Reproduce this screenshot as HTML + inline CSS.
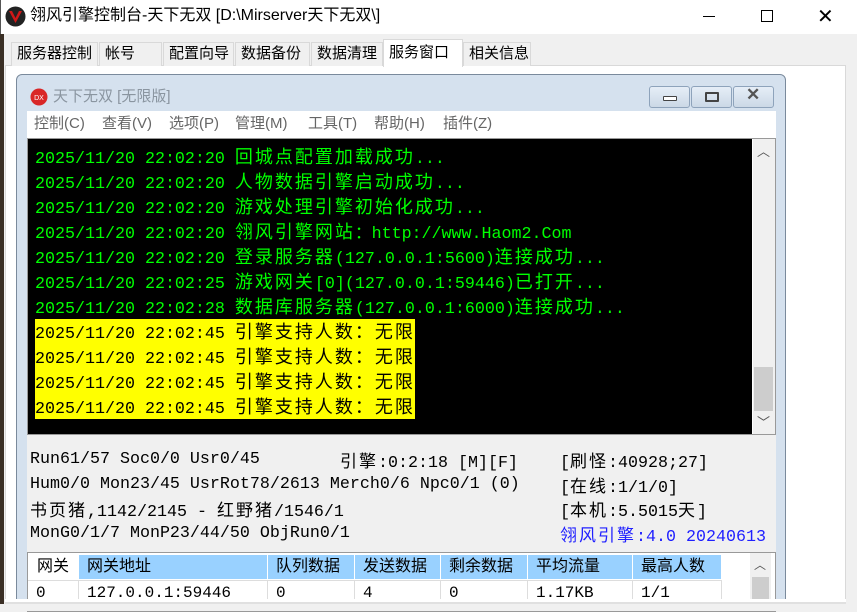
<!DOCTYPE html>
<html><head><meta charset="utf-8"><style>
*{margin:0;padding:0;box-sizing:border-box}
body{width:857px;height:611px;overflow:hidden;background:#f0f0f0;position:relative;font-family:"Liberation Sans","Noto Sans CJK SC",sans-serif}
.a{position:absolute}
.tb{left:0;top:0;width:857px;height:34px;background:#fff;border-left:1px solid #555}
.tab{position:absolute;top:42px;height:24px;background:#f0f0f0;border:1px solid #d9d9d9;border-bottom:none;font-size:15px;line-height:22px;padding-left:5px;color:#000}
.mono{font-family:"Liberation Mono","Noto Sans CJK SC",monospace}
.ln{position:absolute;left:35px;font-size:16.67px;line-height:25px;height:25px;color:#00ff00;white-space:nowrap}
.ln i{font-style:normal;font-family:"Noto Sans CJK SC",sans-serif;font-size:18px;letter-spacing:2px}
.y{background:#ffff00;color:#000}
.st{position:absolute;font-size:16.67px;line-height:25px;white-space:nowrap;color:#000}
.st i{font-style:normal;font-family:"Noto Sans CJK SC",sans-serif;font-size:17px;letter-spacing:2px}
.th{position:absolute;top:555px;height:24px;background:#99d1ff;font-size:16px;line-height:24px;padding-left:8px;border-right:1px solid #fff}
.td{position:absolute;top:580px;height:24px;font-size:16px;line-height:24px;padding-left:8px;border-right:1px solid #ddd;border-top:1px solid #ddd}
.btn{position:absolute;top:86px;width:41px;height:22px;border:1px solid #8ea3bb;border-radius:3px;background:linear-gradient(#e6eef7,#cbd8e6)}
.m{position:absolute;top:114px;font-size:15px;color:#666;line-height:20px;white-space:nowrap}
</style></head><body>
<div class="a" style="left:0;top:0;width:4px;height:611px;background:#3a2f25"></div>
<div class="a tb"></div>
<svg class="a" style="left:5px;top:6px" width="21" height="21" viewBox="0 0 21 21"><circle cx="10.5" cy="10.5" r="10" fill="#222"/><path d="M4 5 L10.5 17 L17 5 L14 5 L10.5 12 L7 5Z" fill="#d01818"/></svg>
<div class="a" style="left:30px;top:6px;font-size:16px;line-height:20px">翎风引擎控制台-天下无双 [D:\Mirserver天下无双\]</div>
<div class="a" style="left:703px;top:16px;width:12px;height:1px;background:#000"></div>
<div class="a" style="left:761px;top:10px;width:12px;height:12px;border:1px solid #000"></div>
<div class="a" style="left:817px;top:4px;font-size:20px;font-weight:300">✕</div>

<div class="a" style="left:5px;top:65px;width:841px;height:537px;background:#fff;border:1px solid #d9d9d9"></div>
<div class="tab" style="left:11px;width:87px">服务器控制</div>
<div class="tab" style="left:99px;width:63px">帐号</div>
<div class="tab" style="left:163px;width:71px">配置向导</div>
<div class="tab" style="left:235px;width:75px">数据备份</div>
<div class="tab" style="left:311px;width:72px">数据清理</div>
<div class="tab" style="left:383px;top:39px;height:28px;width:80px;background:#fff;line-height:26px">服务窗口</div>
<div class="tab" style="left:463px;width:68px">相关信息</div>

<div class="a" style="left:16px;top:74px;width:770px;height:532px;background:#d5e1ee;border:1px solid #7a8a9c;border-radius:6px 6px 0 0"></div>
<svg class="a" style="left:30px;top:88px" width="18" height="18"><circle cx="9" cy="9" r="8.5" fill="#d92727"/><text x="9" y="12" font-size="7" fill="#fff" text-anchor="middle" font-family="Liberation Sans">DX</text></svg>
<div class="a" style="left:53px;top:87px;font-size:15px;color:#8a95a0;line-height:20px">天下无双 [无限版]</div>
<div class="btn" style="left:649px"><div class="a" style="left:13px;top:9px;width:14px;height:5px;border:1px solid #444;background:#fff;border-radius:1px"></div></div>
<div class="btn" style="left:691px"><div class="a" style="left:13px;top:5px;width:14px;height:10px;border:2px solid #444;border-radius:1px"></div></div>
<div class="btn" style="left:733px"><div class="a" style="left:12px;top:-2px;font-size:17px;font-weight:bold;color:#555">✕</div></div>
<div class="a" style="left:27px;top:111px;width:749px;height:27px;background:#fff"></div>
<div class="m" style="left:34px">控制(C)</div>
<div class="m" style="left:102px">查看(V)</div>
<div class="m" style="left:169px">选项(P)</div>
<div class="m" style="left:235px">管理(M)</div>
<div class="m" style="left:308px">工具(T)</div>
<div class="m" style="left:374px">帮助(H)</div>
<div class="m" style="left:443px">插件(Z)</div>

<div class="a" style="left:27px;top:138px;width:749px;height:297px;background:#fff;border:1px solid #999"></div>
<div class="a" style="left:28px;top:139px;width:724px;height:295px;background:#000"></div>
<div class="a" style="left:753px;top:139px;width:22px;height:295px;background:#f0f0f0"></div>
<div class="a" style="left:754px;top:367px;width:19px;height:44px;background:#cdcdcd"></div>
<div class="a" style="left:757px;top:141px;font-size:13px;color:#555">︿</div>
<div class="a" style="left:757px;top:412px;font-size:13px;color:#555">﹀</div>

<div class="mono">
<div class="ln" style="top:144px">2025/11/20 22:02:20 <i>回城点配置加载成功</i>...</div>
<div class="ln" style="top:169px">2025/11/20 22:02:20 <i>人物数据引擎启动成功</i>...</div>
<div class="ln" style="top:194px">2025/11/20 22:02:20 <i>游戏处理引擎初始化成功</i>...</div>
<div class="ln" style="top:219px">2025/11/20 22:02:20 <i>翎风引擎网站</i>：http://www.Haom2.Com</div>
<div class="ln" style="top:244px">2025/11/20 22:02:20 <i>登录服务器</i>(127.0.0.1:5600)<i>连接成功</i>...</div>
<div class="ln" style="top:269px">2025/11/20 22:02:25 <i>游戏网关</i>[0](127.0.0.1:59446)<i>已打开</i>...</div>
<div class="ln" style="top:294px">2025/11/20 22:02:28 <i>数据库服务器</i>(127.0.0.1:6000)<i>连接成功</i>...</div>
<div class="ln y" style="top:319px">2025/11/20 22:02:45 <i>引擎支持人数：无限</i></div>
<div class="ln y" style="top:344px">2025/11/20 22:02:45 <i>引擎支持人数：无限</i></div>
<div class="ln y" style="top:369px">2025/11/20 22:02:45 <i>引擎支持人数：无限</i></div>
<div class="ln y" style="top:394px">2025/11/20 22:02:45 <i>引擎支持人数：无限</i></div>

<div class="a" style="left:27px;top:435px;width:749px;height:117px;background:#f0f0f0"></div>
<div class="st" style="left:30px;top:447px">Run61/57 Soc0/0 Usr0/45</div>
<div class="st" style="left:340px;top:447px"><i>引擎</i>:0:2:18 [M][F]</div>
<div class="st" style="left:560px;top:447px">[<i>刷怪</i>:40928;27]</div>
<div class="st" style="left:30px;top:472px">Hum0/0 Mon23/45 UsrRot78/2613 Merch0/6 Npc0/1 (0)</div>
<div class="st" style="left:560px;top:472px">[<i>在线</i>:1/1/0]</div>
<div class="st" style="left:30px;top:496px"><i>书页猪</i>,1142/2145 - <i>红野猪</i>/1546/1</div>
<div class="st" style="left:560px;top:496px">[<i>本机</i>:5.5015<i>天</i>]</div>
<div class="st" style="left:30px;top:521px">MonG0/1/7 MonP23/44/50 ObjRun0/1</div>
<div class="st" style="left:560px;top:521px;color:#2020ff"><i>翎风引擎</i>:4.0 20240613</div>
</div>

<div class="a" style="left:27px;top:552px;width:749px;height:60px;background:#fff;border:1px solid #999"></div>
<div class="th" style="left:28px;width:51px;background:#fff;padding-left:9px">网关</div>
<div class="th" style="left:79px;width:189px">网关地址</div>
<div class="th" style="left:268px;width:87px">队列数据</div>
<div class="th" style="left:355px;width:86px">发送数据</div>
<div class="th" style="left:441px;width:87px">剩余数据</div>
<div class="th" style="left:528px;width:105px">平均流量</div>
<div class="th" style="left:633px;width:89px">最高人数</div>
<div class="mono">
<div class="td" style="left:28px;width:51px">0</div>
<div class="td" style="left:79px;width:189px">127.0.0.1:59446</div>
<div class="td" style="left:268px;width:87px">0</div>
<div class="td" style="left:355px;width:86px">4</div>
<div class="td" style="left:441px;width:87px">0</div>
<div class="td" style="left:528px;width:105px">1.17KB</div>
<div class="td" style="left:633px;width:89px">1/1</div>
</div>
<div class="a" style="left:750px;top:553px;width:21px;height:58px;background:#f0f0f0"></div>
<div class="a" style="left:752px;top:577px;width:17px;height:34px;background:#cdcdcd"></div>
<div class="a" style="left:754px;top:556px;font-size:12px;color:#555">︿</div>
<div class="a" style="left:5px;top:599px;width:841px;height:5px;background:#fff"></div>
<div class="a" style="left:0;top:604px;width:857px;height:7px;background:#f0f0f0"></div>
<div class="a" style="left:5px;top:602px;width:841px;height:2px;background:#e0e0e0"></div>
</body></html>
